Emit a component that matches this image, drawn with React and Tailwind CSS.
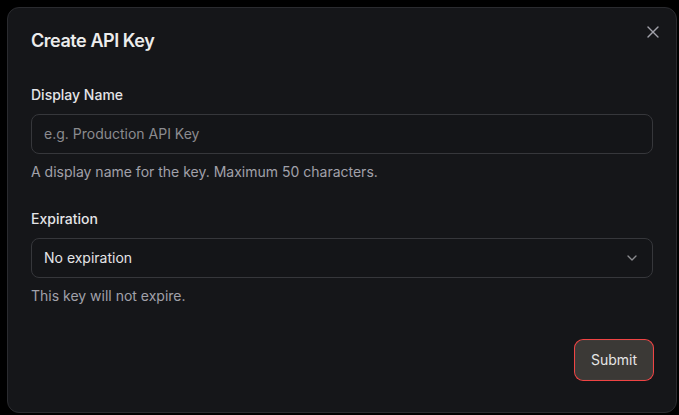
import React from 'react';
import { X, ChevronDown } from 'lucide-react';

const Field = ({ label, children, hint, className = '' }) => (
  <div className={`flex flex-col ${className}`}>
    <label className="text-sm font-medium leading-none text-[#e4e4e7]">{label}</label>
    <div className="mt-[12px]">{children}</div>
    <p className="mt-[8px] text-sm leading-5 text-[#a1a1aa]">{hint}</p>
  </div>
);

const App = () => {
  return (
    <div className="w-[679px] h-[415px] bg-black p-[7px] pr-[2px] pb-[2px] font-['Inter',sans-serif]">
      <div className="relative w-[670px] h-[406px] rounded-[12px] border border-[#2a2b2f] bg-[#151619] px-[23px] pt-[24px]">
        <button className="absolute right-[13px] top-[14px] text-[#a1a1aa]">
          <X className="w-[20px] h-[20px]" strokeWidth={1.6} />
        </button>
        <h2 className="text-lg font-semibold leading-none tracking-tight text-[#ececec]">Create API Key</h2>

        <Field label="Display Name" hint="A display name for the key. Maximum 50 characters." className="mt-[38px]">
          <div className="h-[40px] w-full rounded-[8px] border border-[#36373b] bg-[#141518] px-3 flex items-center text-sm text-[#8b8b8f]">
            e.g. Production API Key
          </div>
        </Field>

        <Field label="Expiration" hint="This key will not expire." className="mt-[30px]">
          <div className="h-[40px] w-full rounded-[8px] border border-[#36373b] bg-[#141518] px-3 flex items-center justify-between text-sm text-[#e4e4e7]">
            <span>No expiration</span>
            <ChevronDown className="w-4 h-4 text-[#8b8b8f]" />
          </div>
        </Field>

        <div className="mt-[34px] flex justify-end">
          <button className="h-[40px] w-[78px] rounded-[8px] border border-[#3f3c39] bg-[#3b3936] text-sm font-normal text-[#e6e6e6] ring-1 ring-[#ef4444]">
            Submit
          </button>
        </div>
      </div>
    </div>
  );
};

export default App;
